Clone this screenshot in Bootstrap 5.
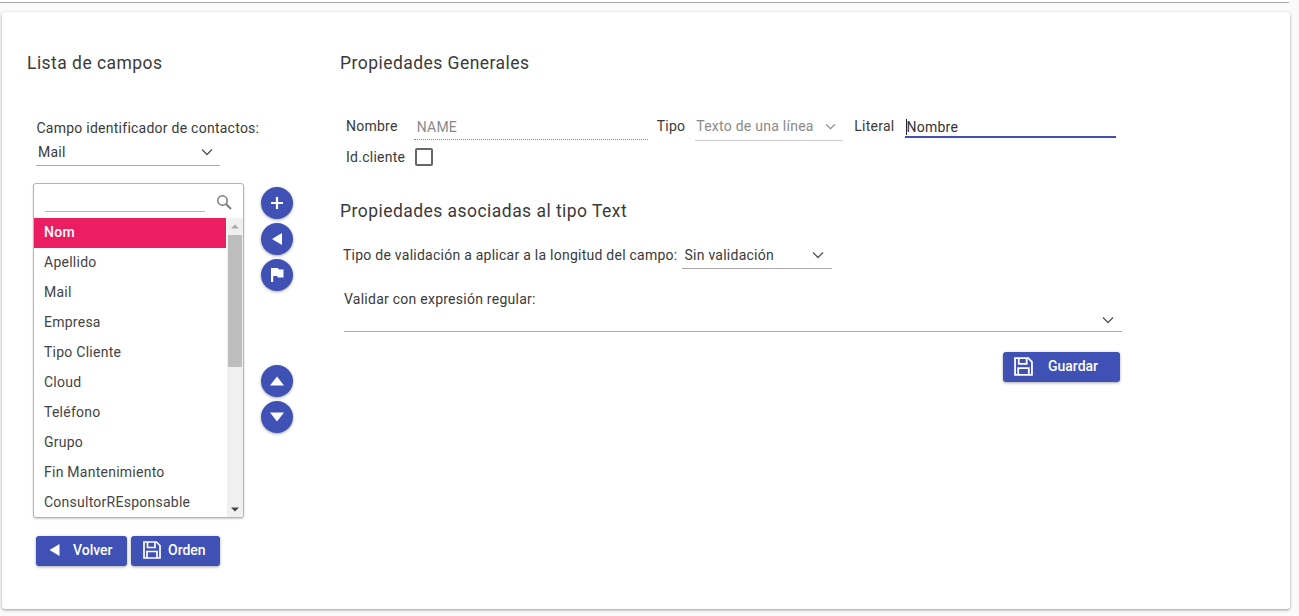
<!DOCTYPE html>
<html lang="es">
<head>
  <meta charset="UTF-8" />
  <meta name="viewport" content="width=device-width, initial-scale=1" />
  <title>Propiedades de campos</title>
  <link href="https://cdn.jsdelivr.net/npm/bootstrap@5.3.2/dist/css/bootstrap.min.css" rel="stylesheet" />
  <style>
    html, body { height: 616px; overflow: hidden; }
    body { font-family: Roboto, sans-serif; font-size: 14px; color: #3a3a3a; background: #fafafa; letter-spacing: .25px; }
    .top-strip { height: 3px; background: #fff; border-bottom: 1px solid #aaa; margin-right: 10px; }
    .panel { margin: 9px 9px 0 2px; height: 597px; background: #fff; border: 0; border-radius: 3px; box-shadow: 0 1px 3px rgba(0,0,0,.4); }
    .side-col { width: 338px; padding: 41px 0 0 25px; flex: none; }
    .main-col { width: 800px; padding-top: 41px; flex: none; }
    .sect-title { font-size: 17.5px; line-height: 20px; font-weight: 400; margin: 0; letter-spacing: .46px; color: #3a3a3a; }
    .id-label { margin: 45px 0 0 9.5px; line-height: 20px; }
    .mat-select { display: flex; justify-content: space-between; align-items: center; border-bottom: 1px solid #aaa; }
    .mat-select svg { flex: none; }
    .id-select { width: 184px; height: 24px; margin: 4px 0 0 9px; padding: 0 7px 3px 2px; }
    .pick-row { margin: 17px 0 0 6px; gap: 17px; }
    .list-box { width: 211px; height: 335px; border: 1px solid #b4b4b4; border-radius: 3px; box-shadow: 0 1px 2px rgba(0,0,0,.2); overflow: hidden; }
    .search-row { height: 34px; padding: 5px 11px 0 11px; position: relative; }
    .search-line { height: 23px; border-bottom: 1px solid #b0b8c0; width: 160px; }
    .search-ico { position: absolute; right: 11px; top: 10px; }
    .list-body { height: 299px; overflow: hidden; }
    .field-list { flex: 1; }
    .field-list .list-group-item { flex: none; height: 30px; padding: 0 0 0 10px; line-height: 28px; border: 0; border-radius: 0; color: #444; background: transparent; }
    .field-list .list-group-item.active { background: #ec1e63; color: #fff; font-weight: 500; }
    .fake-scroll { width: 16px; margin-left: 1px; background: #f0f0f0; display: flex; flex-direction: column; align-items: center; }
    .scroll-arrow { height: 17px; display: flex; align-items: center; justify-content: center; flex: none; }
    .scroll-arrow-end { height: 16px; }
    .scroll-thumb { width: 14px; height: 132px; background: #bdbdbd; }
    .circle-btns { padding-top: 4px; width: 32px; }
    .round-btn { width: 32px; height: 32px; padding: 0; border-radius: 50%; border: 0; background: #3f51b5; display: flex; align-items: center; justify-content: center; box-shadow: 0 1px 3px rgba(0,0,0,.35); margin-bottom: 4px; }
    .round-gap { height: 70px; }
    .flat-btn { background: #3f51b5; color: #fff; border: 0; border-radius: 3px; height: 30px; display: flex; align-items: center; font-size: 14px; font-weight: 500; padding: 0 0 2px; box-shadow: 0 1px 3px rgba(0,0,0,.35); letter-spacing: 0; }
    .flat-btn:hover { background: #3f51b5; color: #fff; }
    .btn-row { margin: 18px 0 0 9px; gap: 4px; }
    .btn-back { width: 91px; padding-left: 13px; gap: 13px; }
    .btn-order { width: 89px; padding-left: 12px; gap: 7px; }
    .btn-save { width: 117px; padding-left: 11px; gap: 15px; }
    .gen-row { margin: 44px 0 0 6px; height: 30px; }
    .gen-label { line-height: 20px; margin-top: -1px; }
    .name-field { width: 234px; margin-left: 16px; height: 23px; padding-left: 3px; border-bottom: 1px dotted #888; color: #8a8a8a; line-height: 20px; }
    .tipo-label { margin-left: 9px; }
    .type-select { width: 148px; height: 24px; margin-left: 10px; padding: 0 7px 5px 1px; color: #8a8a8a; border-bottom-color: #ccc; }
    .lit-label { margin-left: 11px; }
    .lit-field { width: 211px; height: 21px; margin-left: 11px; border-bottom: 2px solid #3f51b5; line-height: 20px; padding-left: 1px; color: #333; }
    .caret-mark { display: inline-block; width: 1px; height: 16px; margin-right: -1px; background: #222; vertical-align: -3px; }
    .client-row { margin: -1px 0 0 6px; height: 22px; gap: 10px; }
    .fake-check { width: 18px; height: 18px; border: 2px solid #666; border-radius: 2px; }
    .sub-title { margin-top: 33px; }
    .valid-row { margin: 24px 0 0 3px; gap: 5px; }
    .valid-row .gen-label { margin-top: 0; }
    .valid-select { width: 150px; height: 24px; padding: 0 8px 3px 2px; }
    .regex-label { margin: 20px 0 0 4px; line-height: 20px; }
    .regex-select { width: 778px; height: 22px; margin: 1px 0 0 4px; padding: 0 8px 1px 0; justify-content: flex-end; }
    .save-row { width: 780px; margin-top: 20px; }
  </style>
</head>
<body>
  <div class="top-strip"></div>
  <div class="card panel flex-row">
    <div class="side-col">
      <h5 class="sect-title">Lista de campos</h5>
      <div class="id-label">Campo identificador de contactos:</div>
      <div class="mat-select id-select">
        <span>Mail</span>
        <svg width="12" height="8" viewBox="0 0 12 8"><path d="M1 1.5 6 6.5 11 1.5" fill="none" stroke="#555" stroke-width="1.3"/></svg>
      </div>
      <div class="d-flex pick-row">
        <div class="list-box bg-white">
          <div class="search-row">
            <div class="search-line"></div>
            <svg class="search-ico" width="16" height="16" viewBox="0 0 16 16"><circle cx="6.5" cy="6.5" r="4.7" fill="none" stroke="#777" stroke-width="1.5"/><path d="M10 10 15 15" stroke="#777" stroke-width="1.8"/></svg>
          </div>
          <div class="d-flex list-body">
            <div class="list-group field-list" id="field-list"></div>
            <div class="fake-scroll">
              <div class="scroll-arrow"><svg width="8" height="5" viewBox="0 0 8 5"><path d="M4 0.5 8 4.5H0Z" fill="#aaa"/></svg></div>
              <div class="scroll-thumb"></div>
              <div class="flex-grow-1"></div>
              <div class="scroll-arrow scroll-arrow-end"><svg width="8" height="5" viewBox="0 0 8 5"><path d="M0 0.5H8L4 4.5Z" fill="#444"/></svg></div>
            </div>
          </div>
        </div>
        <div class="circle-btns">
          <button class="btn round-btn" type="button"><svg width="14" height="14" viewBox="0 0 14 14"><path d="M7 1V13M1 7H13" stroke="#fff" stroke-width="2.2"/></svg></button>
          <button class="btn round-btn" type="button"><svg width="12" height="14" viewBox="0 0 12 14"><path d="M11 1V13L1 7Z" fill="#fff"/></svg></button>
          <button class="btn round-btn" type="button"><svg width="14" height="16" viewBox="0 0 14 16"><path d="M1 1H8L8.7 2.5H13.5V10.5H7.8L7 9H3.2V15H1Z" fill="#fff"/></svg></button>
          <div class="round-gap"></div>
          <button class="btn round-btn" type="button"><svg width="14" height="10" viewBox="0 0 14 10"><path d="M7 .5 14 9.5H0Z" fill="#fff"/></svg></button>
          <button class="btn round-btn" type="button"><svg width="14" height="10" viewBox="0 0 14 10"><path d="M0 .5H14L7 9.5Z" fill="#fff"/></svg></button>
        </div>
      </div>
      <div class="d-flex btn-row">
        <button class="btn flat-btn btn-back" type="button"><svg width="11" height="12" viewBox="0 0 11 12"><path d="M10.5 0V12L.5 6Z" fill="#fff"/></svg>Volver</button>
        <button class="btn flat-btn btn-order" type="button"><svg width="18" height="18" viewBox="0 0 18 18"><path d="M1 1H13.5L17 4.5V17H1Z M4.5 1V6.5H12V1 M4 17V10.5H14V17" fill="none" stroke="#fff" stroke-width="1.7"/></svg>Orden</button>
      </div>
    </div>
    <div class="main-col">
      <h5 class="sect-title">Propiedades Generales</h5>
      <div class="d-flex align-items-start gen-row">
        <span class="gen-label">Nombre</span>
        <div class="name-field">NAME</div>
        <span class="gen-label tipo-label">Tipo</span>
        <div class="mat-select type-select">
          <span>Texto de una línea</span>
          <svg width="11" height="7" viewBox="0 0 12 8"><path d="M1 1.5 6 6.5 11 1.5" fill="none" stroke="#888" stroke-width="1.3"/></svg>
        </div>
        <span class="gen-label lit-label">Literal</span>
        <div class="lit-field"><span class="caret-mark"></span>Nombre</div>
      </div>
      <div class="d-flex align-items-center client-row">
        <span>Id.cliente</span>
        <div class="fake-check"></div>
      </div>
      <h5 class="sect-title sub-title">Propiedades asociadas al tipo Text</h5>
      <div class="d-flex align-items-start valid-row">
        <span class="gen-label">Tipo de validación a aplicar a la longitud del campo:</span>
        <div class="mat-select valid-select">
          <span>Sin validación</span>
          <svg width="12" height="8" viewBox="0 0 12 8"><path d="M1 1.5 6 6.5 11 1.5" fill="none" stroke="#555" stroke-width="1.3"/></svg>
        </div>
      </div>
      <div class="regex-label">Validar con expresión regular:</div>
      <div class="mat-select regex-select">
        <svg width="12" height="8" viewBox="0 0 12 8"><path d="M1 1.5 6 6.5 11 1.5" fill="none" stroke="#555" stroke-width="1.3"/></svg>
      </div>
      <div class="d-flex justify-content-end save-row">
        <button class="btn flat-btn btn-save" type="button"><svg width="19" height="19" viewBox="0 0 18 18"><path d="M1 1H13.5L17 4.5V17H1Z M4.5 1V6.5H12V1 M4 17V10.5H14V17" fill="none" stroke="#fff" stroke-width="1.7"/></svg>Guardar</button>
      </div>
    </div>
  </div>
  <script src="https://cdn.jsdelivr.net/npm/bootstrap@5.3.2/dist/js/bootstrap.bundle.min.js"></script>
  <script>
    const campos = ['Nom', 'Apellido', 'Mail', 'Empresa', 'Tipo Cliente', 'Cloud', 'Teléfono', 'Grupo', 'Fin Mantenimiento', 'ConsultorREsponsable'];
    const fieldList = document.getElementById('field-list');
    campos.forEach((c, i) => {
      const item = document.createElement('div');
      item.className = 'list-group-item' + (i === 0 ? ' active' : '');
      item.textContent = c;
      fieldList.append(item);
    });
  </script>
</body>
</html>
